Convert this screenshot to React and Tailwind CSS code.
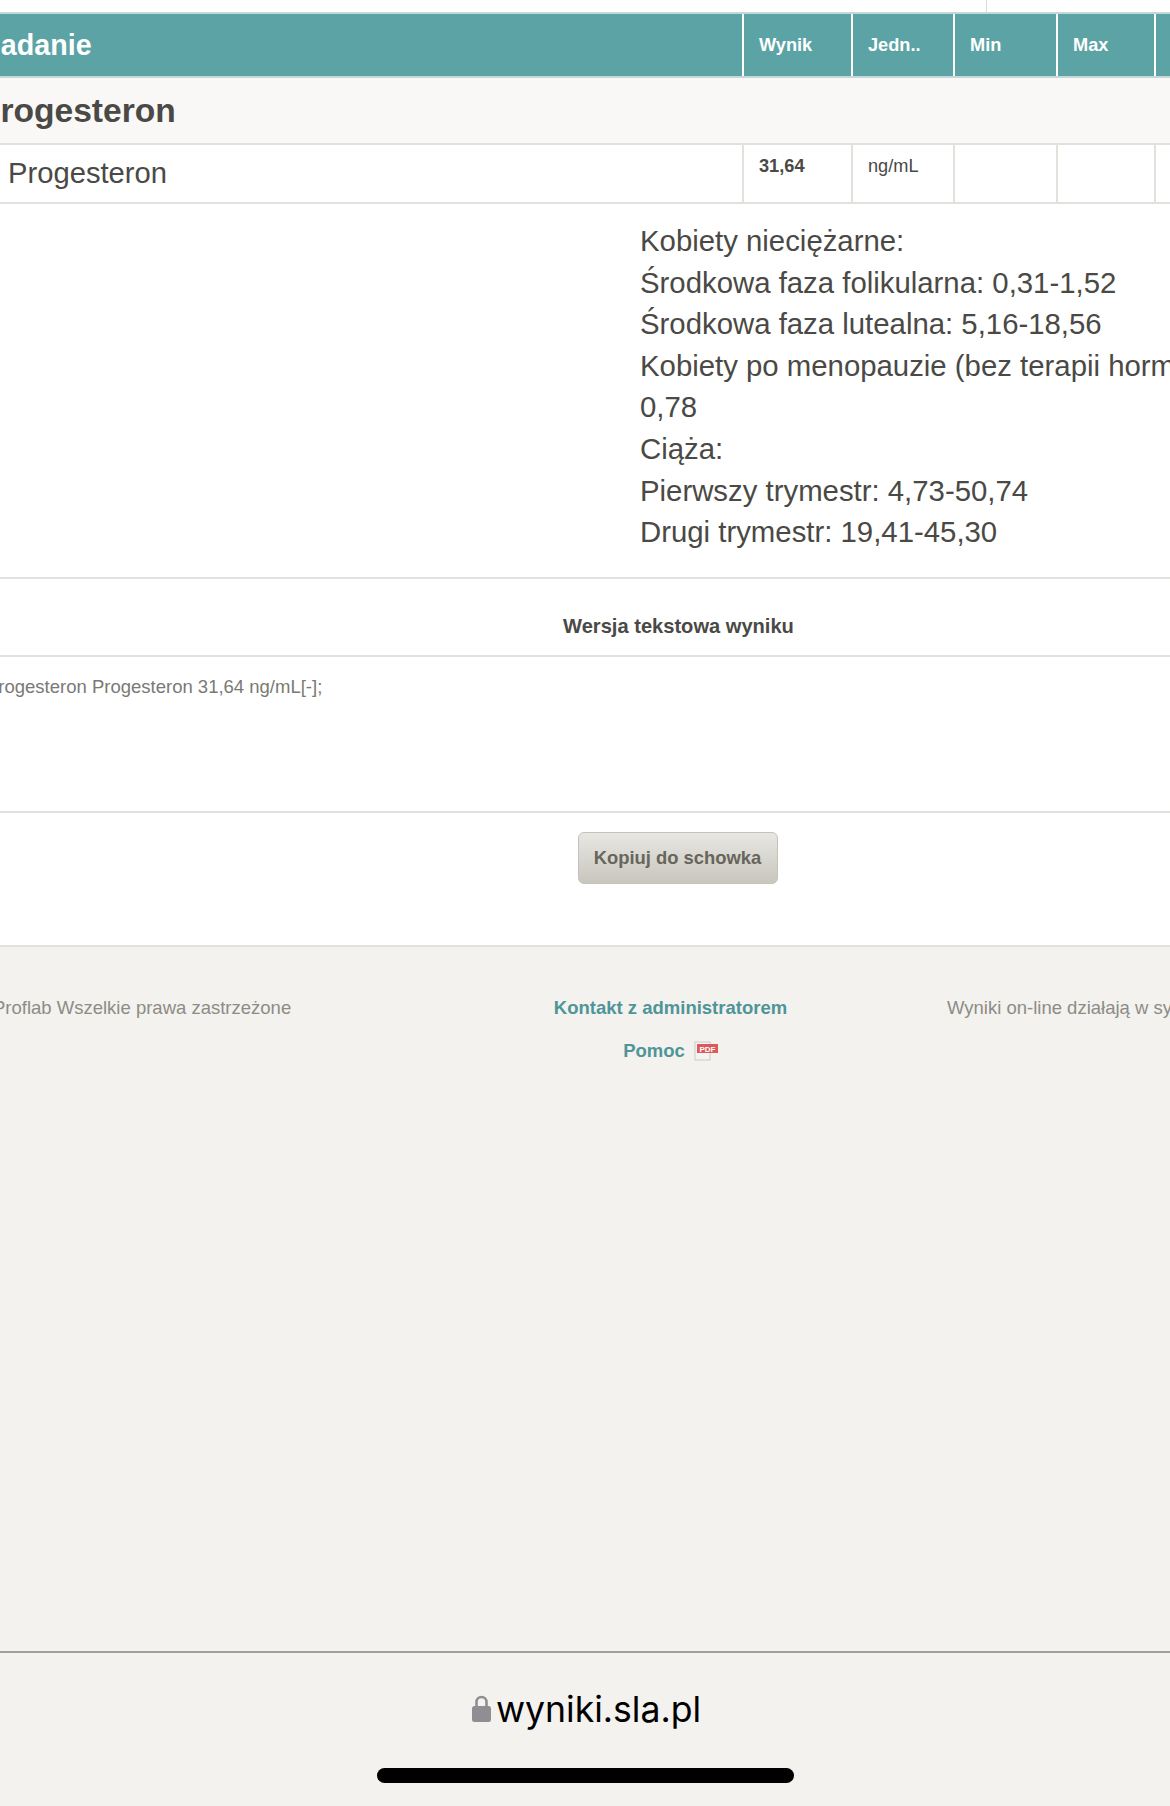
const sans = "font-['Liberation_Sans',Arial,sans-serif]";

const notes = [
  "Kobiety nieciężarne:",
  "Środkowa faza folikularna: 0,31-1,52",
  "Środkowa faza lutealna: 5,16-18,56",
  "Kobiety po menopauzie (bez terapii hormonalnej):",
  "0,78",
  "Ciąża:",
  "Pierwszy trymestr: 4,73-50,74",
  "Drugi trymestr: 19,41-45,30",
];

const HeadCell = ({ width, children }) => (
  <div className={`${width} shrink-0 border-r-2 border-white pl-[15px] text-[18.2px] leading-[63px] font-bold text-white`}>
    {children}
  </div>
);

const BodyCell = ({ width, className, children }) => (
  <div className={`${width} shrink-0 border-r-2 border-[#e2e1dc] pl-[15px] pt-[9px] text-[18.2px] leading-[24px] ${className}`}>
    {children}
  </div>
);

const PdfIcon = () => (
  <svg width="24" height="20" viewBox="0 0 24 20">
    <rect x="1" y="1" width="15" height="18" fill="#f4f4f2" stroke="#c9c9c6" />
    <rect x="3" y="3" width="21" height="9" fill="#dd5a5a" />
    <text x="13.5" y="10.5" textAnchor="middle" fontSize="8" fontWeight="700" fill="#fff" fontFamily="Liberation Sans">
      PDF
    </text>
  </svg>
);

const LockIcon = () => (
  <svg className="mb-[4px]" width="19" height="27" viewBox="0 0 19 27">
    <path d="M4.5 12V7a5 5 0 0 1 10 0v5" fill="none" stroke="#8e8e93" strokeWidth="2.6" />
    <rect x="0" y="11" width="19" height="16" rx="2.5" fill="#8e8e93" />
  </svg>
);

export default function App() {
  return (
    <div className={`${sans} flex h-[1806px] w-[1170px] flex-col overflow-hidden bg-[#f3f2ef] text-[#4a4945]`}>
      <div className="bg-white">
        <div className="ml-[986px] h-[12px] w-[1px] bg-[#dcdcd8]"></div>

        <div className="flex h-[66px] w-[1357px] border-t-2 border-b-2 border-t-[#c5d8d8] border-b-[#c5d8d8] bg-[#5ba3a5]">
          <div className="w-[744px] shrink-0 overflow-hidden border-r-2 border-white">
            <div className="ml-[-20px] text-[28.7px] leading-[62px] font-bold text-white">Badanie</div>
          </div>
          <HeadCell width="w-[109px]">Wynik</HeadCell>
          <HeadCell width="w-[102px]">Jedn..</HeadCell>
          <HeadCell width="w-[103px]">Min</HeadCell>
          <HeadCell width="w-[98px]">Max</HeadCell>
        </div>

        <div className="h-[67px] overflow-hidden border-b-2 border-[#e2e1dc] bg-[#f9f8f6]">
          <div className="ml-[-22px] text-[33.6px] leading-[66px] font-bold">Progesteron</div>
        </div>

        <div className="flex h-[59px] w-[1357px] border-b-2 border-[#e2e1dc]">
          <div className="w-[744px] shrink-0 border-r-2 border-[#e2e1dc] pl-[8px] text-[29.2px] leading-[56px]">Progesteron</div>
          <BodyCell width="w-[109px]" className="font-bold">31,64</BodyCell>
          <BodyCell width="w-[102px]">ng/mL</BodyCell>
          <BodyCell width="w-[103px]"></BodyCell>
          <BodyCell width="w-[98px]"></BodyCell>
        </div>

        <div className="h-[375px] border-b-2 border-[#e2e1dc] pt-[16px] pl-[640px] text-[29.35px] leading-[41.6px] whitespace-nowrap">
          {notes.map((line) => (
            <div key={line}>{line}</div>
          ))}
        </div>

        <div className="h-[78px] w-[1357px] border-b-2 border-[#e2e1dc] text-center text-[20.1px] leading-[94px] font-bold">
          Wersja tekstowa wyniku
        </div>

        <div className="h-[156px] overflow-hidden border-b-2 border-[#e2e1dc] pt-[17px] text-[18.5px] leading-[26px] text-[#7a7974]">
          <div className="ml-[-14px]">Progesteron Progesteron 31,64 ng/mL[-];</div>
        </div>

        <div className="flex h-[134px] w-[1355px] justify-center border-b-2 border-[#e2e1dc] pt-[19px]">
          <button className="h-[52px] w-[200px] rounded-[6px] border border-[#c4c2ba] bg-gradient-to-b from-[#e8e7e3] to-[#c8c6bd] text-[18.4px] font-bold text-[#67655c]">
            Kopiuj do schowka
          </button>
        </div>
      </div>

      <div className="flex w-[1357px] flex-1 pt-[48px] text-[18.5px] leading-[26px] text-[#8d8c86]">
        <div className="w-[292px] shrink-0 overflow-hidden whitespace-nowrap">
          <div className="ml-[-7px]">Proflab Wszelkie prawa zastrzeżone</div>
        </div>
        <div className="flex w-[757px] shrink-0 flex-col items-center font-bold text-[#4f9597]">
          <div>Kontakt z administratorem</div>
          <div className="mt-[17px] flex items-center gap-[9px]">
            Pomoc
            <PdfIcon />
          </div>
        </div>
        <div className="ml-[-102px] whitespace-nowrap">Wyniki on-line działają w systemie</div>
      </div>

      <div className="flex h-[155px] flex-col items-center border-t-2 border-[#a09f9c]">
        <div className="mt-[37px] ml-[3px] flex items-center gap-[5px] font-['Inter',sans-serif] text-[35.6px] leading-[40px] text-black">
          <LockIcon />
          wyniki.sla.pl
        </div>
        <div className="mt-[38px] h-[15px] w-[417px] rounded-full bg-black"></div>
      </div>
    </div>
  );
}
